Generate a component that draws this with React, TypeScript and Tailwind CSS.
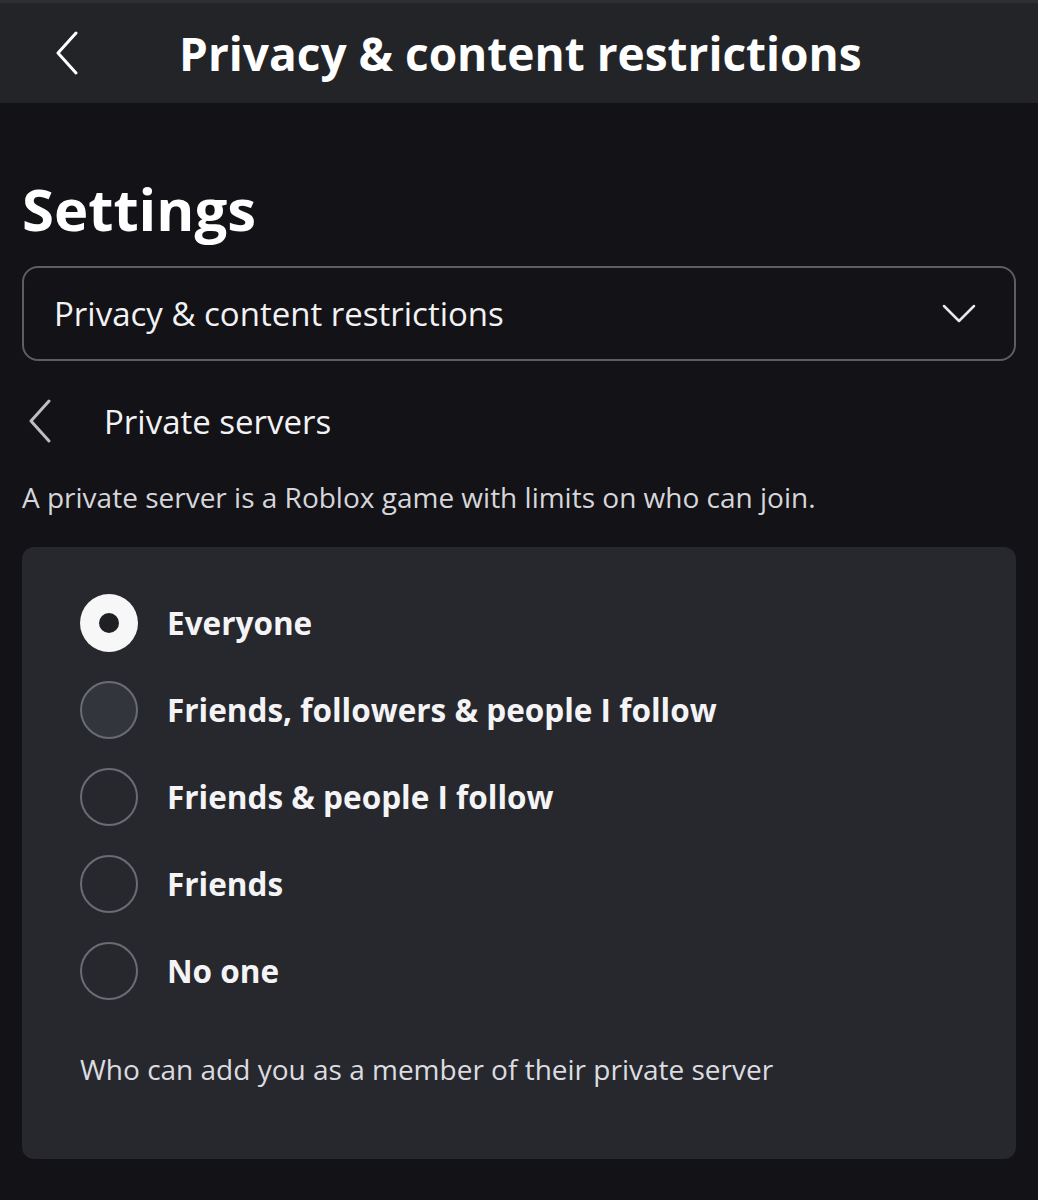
import React from "react";

const options = [
  "Everyone",
  "Friends, followers & people I follow",
  "Friends & people I follow",
  "Friends",
  "No one",
];

function ChevronLeft({ className }: { className?: string }) {
  return (
    <svg viewBox="0 0 24 44" className={className} fill="none" stroke="currentColor" strokeWidth="3" strokeLinecap="round" strokeLinejoin="round">
      <path d="M21 2 L3 22 L21 42" />
    </svg>
  );
}

export default function App() {
  return (
    <div className="w-[1038px] h-[1200px] bg-[#121217] text-white overflow-hidden" style={{ fontFamily: '"Open Sans", "Noto Sans", sans-serif' }}>
      <div className="h-[103px] bg-[#232427] border-t-[3px] border-[#2e2f33] flex items-center">
        <ChevronLeft className="w-[26px] h-[44px] ml-[54px] text-white" />
        <div className="ml-[99px] text-[46px] font-bold leading-none">Privacy &amp; content restrictions</div>
      </div>
      <div className="px-[22px]">
        <div className="mt-[77px] h-[58px] text-[58px] font-bold leading-none">Settings</div>
        <div className="mt-[28px] h-[95px] rounded-[16px] border-2 border-[#5d5e63] flex items-center justify-between pl-[30px] pr-[38px]">
          <span className="text-[33px] leading-none text-[#f2f2f4]">Privacy &amp; content restrictions</span>
          <svg viewBox="0 0 34 20" className="w-[34px] h-[20px]" fill="none" stroke="#e8e8ea" strokeWidth="2.5" strokeLinecap="round" strokeLinejoin="round">
            <path d="M2 2 L17 17 L32 2" />
          </svg>
        </div>
        <div className="mt-[37px] flex items-center h-[46px]">
          <ChevronLeft className="w-[24px] h-[44px] ml-[6px] text-[#bdbdc2]" />
          <span className="ml-[52px] text-[33px] leading-none text-[#f2f2f4]">Private servers</span>
        </div>
        <div className="mt-[35px] text-[28px] leading-[36px] text-[#d6d6da]">A private server is a Roblox game with limits on who can join.</div>
        <div className="mt-[32px] h-[612px] rounded-[12px] bg-[#27282d] px-[58px] pt-[47px]">
          <div className="flex flex-col gap-[29px]">
            {options.map((o, i) => (
              <div key={o} className="flex items-center h-[58px]">
                {i === 0 ? (
                  <div className="w-[58px] h-[58px] rounded-full bg-[#f7f7f8] flex items-center justify-center">
                    <div className="w-[20px] h-[20px] rounded-full bg-[#1f2024]" />
                  </div>
                ) : i === 1 ? (
                  <div className="w-[58px] h-[58px] rounded-full bg-[#33353d] border-2 border-[#6b6c73]" />
                ) : (
                  <div className="w-[58px] h-[58px] rounded-full border-2 border-[#6b6c73]" />
                )}
                <span className="ml-[29px] text-[31.5px] leading-none font-bold text-[#f4f4f6]">{o}</span>
              </div>
            ))}
          </div>
          <div className="mt-[51px] text-[28px] leading-[36px] text-[#dcdce0]">Who can add you as a member of their private server</div>
        </div>
      </div>
    </div>
  );
}
